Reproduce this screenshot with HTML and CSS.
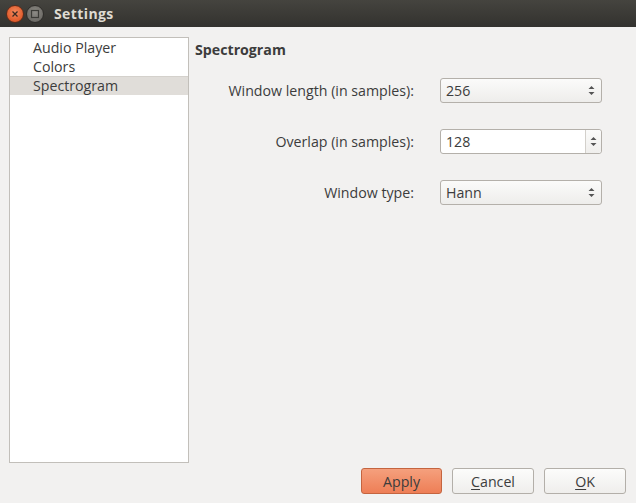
FILE: index.html
```html
<!DOCTYPE html>
<html>
<head>
<meta charset="utf-8">
<link rel="stylesheet" href="styles.css">
</head>
<body>
<div class="window">
  <div class="titlebar">
    <span class="wbtn close"><svg width="10" height="10" viewBox="0 0 10 10"><path d="M2.5 2.5L7.5 7.5M7.5 2.5L2.5 7.5" stroke="#3a2a22" stroke-width="1.3"/></svg></span>
    <span class="wbtn mini"><svg width="10" height="10" viewBox="0 0 10 10"><rect x="1.5" y="1.5" width="7" height="7" fill="none" stroke="#3c3b37" stroke-width="1.2"/></svg></span>
    <span class="title">Settings</span>
  </div>
  <div class="content">
    <div class="main">
      <ul class="list">
        <li>Audio Player</li>
        <li>Colors</li>
        <li class="sel">Spectrogram</li>
      </ul>
      <div class="panel">
        <div class="heading">Spectrogram</div>
        <div class="form">
          <label>Window length (in samples):</label>
          <div class="combo"><span>256</span><span class="arrows"><svg width="7" height="11" viewBox="0 0 7 11"><path d="M0.5 4L3.5 1L6.5 4Z M0.5 7L3.5 10L6.5 7Z" fill="#555"/></svg></span></div>
          <label>Overlap (in samples):</label>
          <div class="spin"><span class="val">128</span><span class="spinbtns"><svg width="7" height="11" viewBox="0 0 7 11"><path d="M0.5 4L3.5 1L6.5 4Z M0.5 7L3.5 10L6.5 7Z" fill="#555"/></svg></span></div>
          <label>Window type:</label>
          <div class="combo"><span>Hann</span><span class="arrows"><svg width="7" height="11" viewBox="0 0 7 11"><path d="M0.5 4L3.5 1L6.5 4Z M0.5 7L3.5 10L6.5 7Z" fill="#555"/></svg></span></div>
        </div>
      </div>
    </div>
    <div class="buttons">
      <button class="btn apply">Apply</button>
      <button class="btn"><u>C</u>ancel</button>
      <button class="btn"><u>O</u>K</button>
    </div>
  </div>
</div>
</body>
</html>
```
FILE: styles.css
```css
* { box-sizing: border-box; }
html, body { margin: 0; padding: 0; }
body {
  width: 636px; height: 503px; overflow: hidden;
  font-family: "Open Sans", "Noto Sans", sans-serif;
  font-size: 14.2px;
  color: #3c3c3c;
  background: #f2f1f0;
}
.window { display: flex; flex-direction: column; height: 503px; }
.titlebar {
  height: 27px;
  background: linear-gradient(#45443f, #3a3935 60%, #33322f);
  display: flex; align-items: center;
  padding-left: 6px;
  gap: 2px;
}
.wbtn {
  width: 18px; height: 18px; border-radius: 50%;
  display: flex; align-items: center; justify-content: center;
}
.close { background: radial-gradient(circle at 50% 40%, #f48a5e, #e05b2b 70%, #c7471d); border: 1px solid #5a2c1c; }
.mini { background: radial-gradient(circle at 50% 40%, #8c8a85, #6e6c67 70%, #5c5a56); border: 1px solid #2e2d2a; }
.title {
  margin-left: 8px;
  color: #dfdbd2; font-weight: bold; font-size: 14px; letter-spacing: 0.4px;
}
.content { flex: 1; display: flex; flex-direction: column; padding: 10px 10px 9px 9px; }
.main { flex: 1; display: flex; gap: 6px; }
.list {
  margin: 0; padding: 0; list-style: none;
  width: 180px; height: 426px;
  background: #fff; border: 1px solid #c2bfba;
}
.list li { height: 19px; line-height: 19px; padding-left: 23px; }
.list li.sel { background: #e0ddd9; border-top: 1px solid #d4d1cc; line-height: 18px; }
.panel { flex: 1; padding-top: 3px; }
.heading { font-weight: bold; height: 20px; }
.form {
  display: grid;
  grid-template-columns: 219px 162px;
  column-gap: 26px;
  row-gap: 26px;
  margin-top: 18px;
  align-items: center;
}
label { text-align: right; }
.combo, .spin {
  height: 25px; border: 1px solid #b4b0aa; border-radius: 3px;
  display: flex; align-items: center;
}
.combo {
  background: linear-gradient(#fbfbfa, #eeedeb);
  padding-left: 5px; justify-content: space-between;
}
.arrows { padding-right: 6px; display: flex; }
.spin { background: #fff; }
.spin .val { flex: 1; padding-left: 5px; }
.spinbtns {
  width: 16px; height: 100%;
  border-left: 1px solid #d3d0cb;
  background: linear-gradient(#fbfbfa, #efeeec);
  display: flex; align-items: center; justify-content: center;
  border-radius: 0 3px 3px 0;
}
.buttons { display: flex; justify-content: flex-end; gap: 10px; }
.btn {
  font: inherit; color: #3c3c3c;
  width: 82px; height: 26px;
  border: 1px solid #b3afa9; border-radius: 3px;
  background: linear-gradient(#fcfcfb, #efeeec);
  padding: 0;
}
.btn.apply {
  width: 81px;
  background: linear-gradient(#f5a07d, #ee7e56);
  border-color: #c4643f;
}
.btn u { text-decoration: underline; text-underline-offset: 2px; }
```
